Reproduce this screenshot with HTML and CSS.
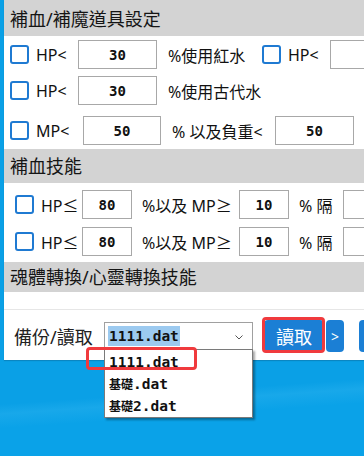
FILE: index.html
```html
<!DOCTYPE html>
<html lang="zh-Hant">

<head>
    <meta charset="UTF-8">
    <meta name="viewport" content="width=device-width, initial-scale=1.0">
    <title>補血設定</title>
    <link rel="stylesheet" href="styles.css">
</head>

<body>
    <div class="window">
        <div class="section-title title-items">補血/補魔道具設定</div>

        <div class="row row-a">
            <input type="checkbox" class="check">
            <span class="label lbl-hp">HP&lt;</span>
            <input type="text" class="field f-wide" value="30" readonly>
            <span class="label lbl-red">%使用紅水</span>
            <input type="checkbox" class="check">
            <span class="label lbl-hp">HP&lt;</span>
            <input type="text" class="field f-wide" value="" readonly>
        </div>

        <div class="row row-b">
            <input type="checkbox" class="check">
            <span class="label lbl-hp">HP&lt;</span>
            <input type="text" class="field f-wide" value="30" readonly>
            <span class="label lbl-red">%使用古代水</span>
        </div>

        <div class="row row-c">
            <input type="checkbox" class="check">
            <span class="label lbl-mp">MP&lt;</span>
            <input type="text" class="field f-mp" value="50" readonly>
            <span class="label lbl-weight">% 以及負重&lt;</span>
            <input type="text" class="field f-wide" value="50" readonly>
        </div>

        <div class="section-title title-skill">補血技能</div>

        <div class="row row-skill row-d">
            <input type="checkbox" class="check">
            <span class="label lbl-hp2">HP≤</span>
            <input type="text" class="field f-small" value="80" readonly>
            <span class="label lbl-and">%以及 MP≥</span>
            <input type="text" class="field f-small" value="10" readonly>
            <span class="label lbl-gap">% 隔</span>
            <input type="text" class="field f-small" value="" readonly>
        </div>

        <div class="row row-skill row-e">
            <input type="checkbox" class="check">
            <span class="label lbl-hp2">HP≤</span>
            <input type="text" class="field f-small" value="80" readonly>
            <span class="label lbl-and">%以及 MP≥</span>
            <input type="text" class="field f-small" value="10" readonly>
            <span class="label lbl-gap">% 隔</span>
            <input type="text" class="field f-small" value="" readonly>
        </div>

        <div class="section-title title-soul">魂體轉換/心靈轉換技能</div>

        <div class="divider"></div>

        <div class="load-row">
            <span class="load-label">備份/讀取</span>
            <div class="combo">
                <span class="combo-value">1111.dat</span>
                <svg class="combo-arrow" width="8" height="5" viewBox="0 0 8 5">
                    <polyline points="0.5,0.5 4,4 7.5,0.5" fill="none" stroke="#555" stroke-width="1"/>
                </svg>
                <ul class="combo-list">
                    <li>1111.dat</li>
                    <li><span class="cjk">基礎</span>.dat</li>
                    <li><span class="cjk">基礎</span>2.dat</li>
                    <span class="mark mark-item"></span>
                </ul>
            </div>
            <div class="btn-wrap">
                <button class="btn btn-load">讀取</button>
                <span class="mark mark-btn"></span>
            </div>
            <button class="btn btn-next">&gt;</button>
            <button class="btn btn-more"></button>
        </div>
    </div>
</body>

</html>
```

FILE: styles.css
```css
* {
    box-sizing: border-box;
}

body {
    margin: 0;
    width: 364px;
    height: 456px;
    overflow: hidden;
    padding-left: 4px;
    background: linear-gradient(176deg, #0aa0e6 0%, #0aa0e6 84%, #18a8ea 86%, #0aa2e8 89%, #0aa2e8 100%);
    font-family: "Noto Sans", "Noto Sans CJK TC", sans-serif;
    color: #111;
}

.window {
    position: relative;
    width: 360px;
    height: 360px;
    background: #fff;
    box-shadow: 0 1px 1px #0a86c2;
}

.section-title {
    background: #d3d3d3;
    padding-left: 6px;
    font-size: 18px;
    color: #151515;
    white-space: nowrap;
}

.title-items {
    height: 36px;
    line-height: 38px;
}

.title-skill {
    height: 34px;
    line-height: 34px;
    margin-top: 4px;
}

.title-soul {
    height: 30px;
    line-height: 31px;
    margin-top: 6px;
}

/* rows run on past the right edge of the window */
.row {
    display: flex;
    align-items: center;
    height: 29px;
    padding-left: 6px;
    font-size: 16px;
    white-space: nowrap;
    overflow: hidden;
}

.row-a {
    margin-top: 4px;
}

.row-b {
    margin-top: 7px;
}

.row-c {
    margin-top: 11px;
}

.row-skill {
    padding-left: 11px;
}

.row-d {
    margin-top: 7px;
}

.row-e {
    margin-top: 8px;
}

.check {
    appearance: none;
    flex-shrink: 0;
    width: 19px;
    height: 19px;
    margin: 0;
    background: #fff;
    border: 2px solid #1f7ad2;
    border-radius: 3px;
}

.label {
    flex-shrink: 0;
    display: block;
}

.lbl-hp {
    width: 49px;
    padding-left: 7px;
}

.lbl-mp {
    width: 54px;
    padding-left: 7px;
}

.lbl-red {
    width: 105px;
    padding-left: 11px;
}

.lbl-weight {
    width: 114px;
    padding-left: 11px;
}

.lbl-hp2 {
    width: 48px;
    padding-left: 7px;
}

.lbl-and {
    width: 107px;
    padding-left: 10px;
}

.lbl-gap {
    width: 54px;
    padding-left: 10px;
}

.field {
    flex-shrink: 0;
    height: 29px;
    padding: 0;
    border: 1px solid #a8a8a8;
    background: #fff;
    color: #111;
    font: bold 14px "DejaVu Sans Mono", monospace;
    text-align: center;
    outline: none;
}

.f-wide {
    width: 79px;
}

.f-mp {
    width: 78px;
}

.f-small {
    width: 50px;
}

.divider {
    height: 1px;
    margin-top: 17px;
    background: #e6e6e6;
}

.load-row {
    display: flex;
    align-items: center;
    height: 32px;
    margin-top: 10px;
    padding-left: 10px;
}

.load-label {
    flex-shrink: 0;
    width: 90px;
    font-size: 18px;
    color: #222;
    white-space: nowrap;
}

.combo {
    position: relative;
    flex-shrink: 0;
    display: flex;
    align-items: center;
    justify-content: space-between;
    width: 149px;
    height: 28px;
    padding: 0 9px 0 3px;
    border: 1px solid #a0a0a0;
    background: #fff;
}

.combo-value {
    padding: 0 1px;
    background: #9ccaf0;
    font: bold 14.5px "DejaVu Sans Mono", monospace;
    line-height: 20px;
}

.combo-arrow {
    margin-top: 2px;
}

.combo-list {
    position: absolute;
    top: 100%;
    left: -1px;
    width: 149px;
    margin: 0;
    padding: 1px 0 0;
    list-style: none;
    background: #fff;
    border: 1px solid #7a7a7a;
    box-shadow: 2px 2px 2px rgba(0, 0, 0, 0.35);
    z-index: 5;
}

.combo-list li {
    height: 22px;
    padding-left: 4px;
    font: bold 14.5px "DejaVu Sans Mono", monospace;
    line-height: 22px;
    color: #111;
}

.combo-list .cjk {
    font-family: "Noto Sans CJK TC", sans-serif;
    font-size: 12px;
    font-weight: 700;
}

.mark {
    position: absolute;
    border: 3px solid #f03a3d;
    border-radius: 4px;
    pointer-events: none;
}

.mark-item {
    top: -3px;
    left: -19px;
    width: 111px;
    height: 23px;
}

.btn-wrap {
    position: relative;
    flex-shrink: 0;
    margin-left: 11px;
}

.mark-btn {
    top: -3px;
    right: -1px;
    bottom: -1px;
    left: -2px;
}

.btn {
    display: block;
    flex-shrink: 0;
    height: 32px;
    padding: 0;
    border: none;
    border-radius: 4px;
    background: #1b7fd5;
    color: #fff;
    font-family: "Noto Sans CJK TC", sans-serif;
    font-size: 18px;
}

.btn-load {
    width: 60px;
}

.btn-next {
    width: 18px;
    margin-left: 2px;
    font-family: "Noto Sans", sans-serif;
    font-size: 14px;
}

/* only the left edge of this button is in the shot */
.btn-more {
    width: 5px;
    margin-left: 15px;
    border-radius: 4px 0 0 4px;
}
```
